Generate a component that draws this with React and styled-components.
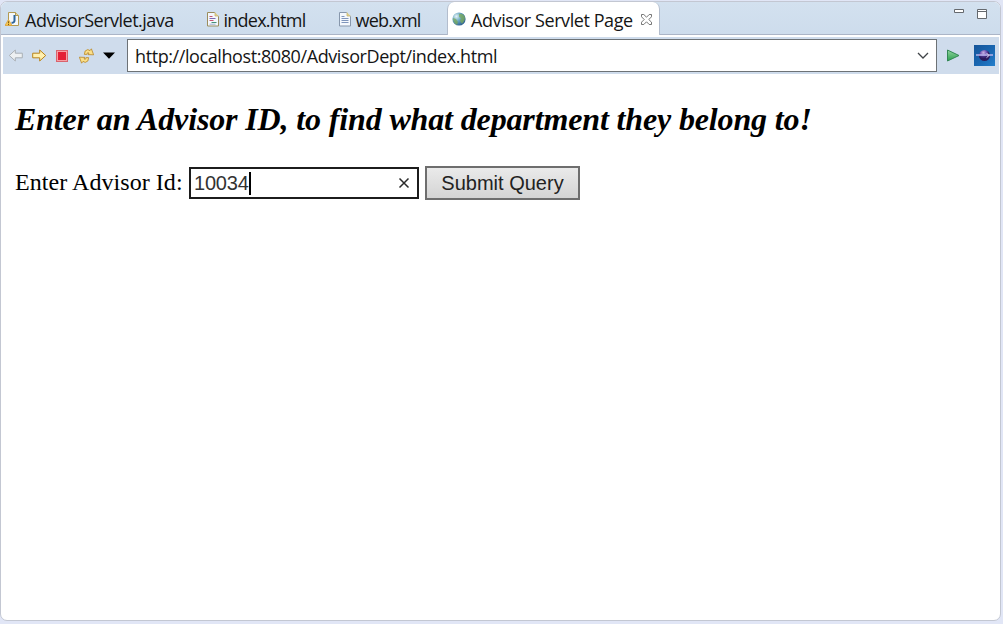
import React from 'react';
import styled, { createGlobalStyle } from 'styled-components';

const Global = createGlobalStyle`
  * { box-sizing: border-box; }
  body { margin: 0; background: #e1e6f6; overflow: hidden; }
`;

const ui = "'Open Sans', 'Noto Sans', sans-serif";

const Window = styled.div`
  width: 1003px;
  height: 624px;
  padding: 1px 2px 3px 0;
  background: #e1e6f6;
`;

const Pane = styled.main`
  display: flex;
  flex-direction: column;
  height: 620px;
  border: 1px solid #c3c7d2;
  border-radius: 7px;
  background: #fff;
  overflow: hidden;
`;

const TabBar = styled.header`
  display: flex;
  height: 33px;
  flex: none;
  background: linear-gradient(#d3e1ef, #cddcec);
  box-shadow: inset 0 -1px #abb5c7;
`;

const Tab = styled.div`
  display: flex;
  align-items: center;
  width: ${(p) => p.$width}px;
  padding: 3px 0 0 ${(p) => p.$pad}px;
  gap: 5px;
  border: solid #b3bdcd;
  border-width: ${(p) => (p.$active ? '0 1px' : '0')};
  border-radius: 7px 7px 0 0;
  background: ${(p) => (p.$active ? '#fff' : 'transparent')};

  > svg { margin-top: -2px; }
  > span + svg { margin-left: 3px; }
`;

const Label = styled.span`
  font: 18px/24px ${ui};
  letter-spacing: ${(p) => p.$spacing}px;
  color: #151515;
  white-space: pre;
`;

const WindowControls = styled.div`
  display: flex;
  gap: 13px;
  margin-left: auto;
  padding: 7px 13px 0 0;
`;

const Toolbar = styled.nav`
  display: flex;
  align-items: center;
  flex: none;
  height: 37px;
  margin: 2px 1px 0 2px;
  padding-left: 5px;
  background: #cfdcec;
`;

const Nav = styled.div`
  display: flex;
  align-items: center;
  gap: 8.5px;
  width: 119px;
`;

const Address = styled.div`
  display: flex;
  align-items: center;
  justify-content: space-between;
  width: 810px;
  height: 33px;
  padding: 0 7px;
  border: 1px solid #6d7276;
  background: #fff;
`;

const Actions = styled.div`
  display: flex;
  align-items: center;
  gap: 14px;
  margin-left: 10px;
`;

const Page = styled.section`
  padding: 25px 14px;
`;

const Heading = styled.h1`
  margin: 0;
  height: 40px;
  font: italic bold 32px/40px 'Liberation Serif', serif;
  letter-spacing: -0.14px;
  color: #000;
  white-space: nowrap;
`;

const Form = styled.form`
  display: flex;
  align-items: center;
  margin-top: 27px;
`;

const FieldLabel = styled.label`
  width: 174px;
  padding-bottom: 2px;
  font: 24px/30px 'Liberation Serif', serif;
  letter-spacing: 0.06px;
  color: #000;
  white-space: nowrap;
`;

const Field = styled.div`
  display: flex;
  align-items: center;
  width: 230px;
  height: 32px;
  padding: 0 7px 0 3px;
  border: 2px solid #1c1c1c;
  background: #fff;
  font: 20px/26px 'Liberation Sans', sans-serif;
  letter-spacing: -0.2px;
  color: #333;
`;

const Caret = styled.i`
  width: 2px;
  height: 23px;
  margin-right: auto;
  background: #000;
`;

const Submit = styled.button`
  width: 155px;
  height: 34px;
  margin-left: 6px;
  padding: 0;
  border: 2px solid #6e6e6e;
  background: linear-gradient(#eaeaea, #d4d4d4);
  font: 20px/26px 'Liberation Sans', sans-serif;
  color: #222;
`;

const Icon = styled.svg`
  display: block;
  flex: none;
`;

const JavaIcon = () => (
  <Icon width="15" height="16" viewBox="0 0 15 16">
    <path d="M3.5 1.5h7l3 3v10h-10z" fill="#f4f8fc" stroke="#b39a52" />
    <path d="M10.5 1.5v3h3" fill="#e7d79d" stroke="#b39a52" />
    <path d="M9.5 4v5.5q0 2.5-3 2.2" fill="none" stroke="#2d659c" strokeWidth="2" />
    <path d="M3.5 8.5 7 14.5H0z" fill="#f8c850" stroke="#d9a03a" strokeWidth=".8" strokeLinejoin="round" />
    <path d="M3.5 10.3v2M3.5 13v1" stroke="#7a5a18" />
  </Icon>
);

const DocIcon = ({ html }) => (
  <Icon width="12" height="15" viewBox="0 0 12 15">
    <path d="M.5.5h7l4 4v9.5H.5z" fill="#f4f8fd" stroke={html ? '#9b8d5d' : '#8797ac'} />
    <path d="M8 .5v3.5h3.5" fill="#e8d58a" stroke="#c4b372" strokeWidth=".8" />
    <path d="M2.5 4.5h3" stroke={html ? '#c65772' : '#7f95bb'} />
    <path d={html ? 'M2.5 6.5h6' : 'M2.5 6.5h7'} stroke={html ? '#7c69b1' : '#7f95bb'} />
    <path d={html ? 'M2.5 8.5h4' : 'M2.5 8.5h7'} stroke={html ? '#c65772' : '#7f95bb'} />
    <path d={html ? 'M4.5 10.5h5' : 'M2.5 10.5h7'} stroke={html ? '#459078' : '#7f95bb'} />
    {html && <path d="M2.5 12.2h6" stroke="#7f95bb" strokeWidth=".7" />}
  </Icon>
);

const GlobeIcon = () => (
  <Icon width="14" height="14" viewBox="0 0 14 14">
    <defs>
      <radialGradient id="sea" cx=".3" cy=".3" r=".8">
        <stop stopColor="#e4f2f5" /><stop offset=".45" stopColor="#69a7c2" /><stop offset="1" stopColor="#28598d" />
      </radialGradient>
    </defs>
    <circle cx="7" cy="7" r="6.6" fill="url(#sea)" />
    <path d="M7 2q4-1 5.8 2.5.8 4-2.8 7.2L8 9l1-3-2-1zM1 6l3 1 2 3-1 3Q1 11 1 6z" fill="#79a958" opacity=".75" />
  </Icon>
);

const CloseIcon = () => (
  <Icon width="11" height="11" viewBox="0 0 11 11">
    <path d="M.5.5h2.3l2.7 2.7L8.2.5h2.3v2.3L7.8 5.5l2.7 2.7v2.3H8.2L5.5 7.8l-2.7 2.7H.5V8.2l2.7-2.7L.5 2.8z" fill="#fff" stroke="#666" strokeWidth=".9" />
  </Icon>
);

const ArrowIcon = ({ back }) => (
  <Icon width="15" height="13" viewBox="0 0 15 13">
    <path
      d="M.7 4.2h7V1l6 5.5-6 5.5V8.8h-7z"
      transform={back ? 'matrix(-1 0 0 1 15 0)' : undefined}
      fill={back ? '#edf0f2' : '#fff0b0'}
      stroke={back ? '#a9afb5' : '#b98319'}
      strokeLinejoin="round"
    />
  </Icon>
);

const StopIcon = () => (
  <Icon width="15" height="12" viewBox="0 0 15 12">
    <rect x="1.5" y=".5" width="11" height="11" fill="#f7a0a5" stroke="#d9636d" />
    <rect x="3" y="2" width="8" height="8" fill="#e42036" />
  </Icon>
);

const RefreshIcon = () => (
  <Icon width="16" height="16" viewBox="0.6 0 16 16">
    <g fill="#fbe08a" stroke="#b98524" strokeWidth=".8" strokeLinejoin="round">
      <path d="M6 6.4Q5.8 2 9.4 1.6L11.6 2.6 13 .8 15.2 6.8 9.6 6.6 10.6 5Q8.6 4 8.4 6.4Z" />
      <path d="M10.2 9.6Q10.4 14 6.8 14.4L4.6 13.4 3.2 15.2 1 9.2 6.6 9.4 5.6 11Q7.6 12 7.8 9.6Z" />
    </g>
  </Icon>
);

const DropIcon = () => (
  <Icon width="12" height="7" viewBox="0 0 12 7"><path d="M0 .5h12L6 6.7z" /></Icon>
);

const ChevronIcon = () => (
  <Icon width="12" height="8" viewBox="0 0 12 8"><path d="m1 1 5 5 5-5" fill="none" stroke="#404448" strokeWidth="1.3" /></Icon>
);

const RunIcon = () => (
  <Icon width="13" height="13" viewBox="0 0 13 13">
    <defs><linearGradient id="run" x2="0" y2="1"><stop stopColor="#92d4a0" /><stop offset="1" stopColor="#2a9f4c" /></linearGradient></defs>
    <path d="M.5 1v11l11.5-5.5z" fill="url(#run)" stroke="#328754" strokeLinejoin="round" />
  </Icon>
);

const BrowserIcon = () => (
  <Icon width="21" height="21" viewBox="0 0 21 21">
    <defs>
      <linearGradient id="tile" x2="1" y2="1"><stop stopColor="#155499" /><stop offset=".6" stopColor="#1a69b4" /><stop offset="1" stopColor="#247fcc" /></linearGradient>
      <radialGradient id="moon" cx=".4" cy=".25"><stop stopColor="#c9b3e4" /><stop offset=".6" stopColor="#6a4fae" /><stop offset="1" stopColor="#2b1a5c" /></radialGradient>
    </defs>
    <path d="M0 0h21v21H0z" fill="url(#tile)" />
    <circle cx="10.5" cy="10.5" r="5.5" fill="url(#moon)" />
    <path d="M2 10h17" stroke="#b9b2ea" strokeWidth="1.4" />
    <path d="M5.5 12h10" stroke="#34206f" />
    <path d="M12.5 8 15 10.5l-2.5 2.2" fill="none" stroke="#dccdec" />
  </Icon>
);

const ClearIcon = () => (
  <Icon width="12" height="12" viewBox="0 0 12 12"><path d="m1.5 1.5 9 9m0-9-9 9" stroke="#2b2b2b" strokeWidth="1.5" /></Icon>
);

export default function App() {
  return (
    <Window>
      <Global />
      <Pane>
        <TabBar>
          <Tab $width={205} $pad={4}><JavaIcon /><Label $spacing={-0.5}>AdvisorServlet.java</Label></Tab>
          <Tab $width={132} $pad={0.5}><DocIcon html /><Label $spacing={-0.76}>index.html</Label></Tab>
          <Tab $width={109} $pad={0.5}><DocIcon /><Label $spacing={-0.76}>web.xml</Label></Tab>
          <Tab $active $width={213} $pad={4}>
            <GlobeIcon /><Label $spacing={-0.42}>Advisor Servlet Page</Label><CloseIcon />
          </Tab>
          <WindowControls>
            <Icon width="10" height="5" viewBox="0 0 10 5"><path d="M.5.5h9v3h-9z" fill="#fff" stroke="#65696e" /></Icon>
            <Icon width="10" height="10" viewBox="0 0 10 10"><path d="M.5.5h9v9h-9zM.5 2.5h9" fill="#fff" stroke="#65696e" /></Icon>
          </WindowControls>
        </TabBar>
        <Toolbar>
          <Nav><ArrowIcon back /><ArrowIcon /><StopIcon /><RefreshIcon /><DropIcon /></Nav>
          <Address><Label $spacing={-0.41}>http://localhost:8080/AdvisorDept/index.html</Label><ChevronIcon /></Address>
          <Actions><RunIcon /><BrowserIcon /></Actions>
        </Toolbar>
        <Page>
          <Heading>Enter an Advisor ID, to find what department they belong to!</Heading>
          <Form>
            <FieldLabel>Enter Advisor Id:</FieldLabel>
            <Field>10034<Caret /><ClearIcon /></Field>
            <Submit type="button">Submit Query</Submit>
          </Form>
        </Page>
      </Pane>
    </Window>
  );
}
